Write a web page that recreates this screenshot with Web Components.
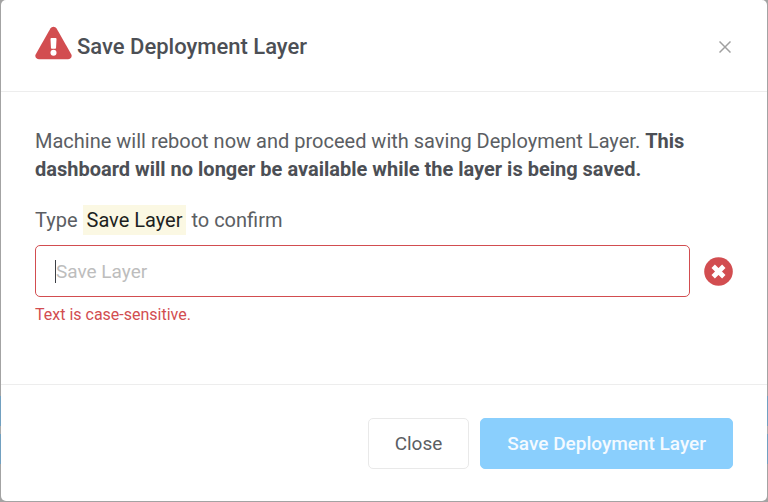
<!DOCTYPE html>
<html lang="en">
<head>
<meta charset="utf-8">
<meta name="viewport" content="width=device-width, initial-scale=1">
<title>Save Deployment Layer</title>
<style>
  body {
    margin: 0;
    min-height: 100vh;
    display: grid;
    box-sizing: border-box;
    padding: 0 1px 1px;
    background: linear-gradient(#a3a3a3 0 396px, #71a0c0 396px 426px, #aaa 426px 434px, #71a0c0 434px 464px, #a3a3a3 464px);
    font-family: Roboto, sans-serif;
    font-size: 20px;
    line-height: 28px;
    color: #5b5e63;
    --danger: #d24d50;
    --line: #ededed;
    --strong: #4c4f55;
    --control-size: 19px;
  }
</style>
</head>
<body>
<modal-dialog heading="Save Deployment Layer">
  <warning-icon slot="icon"></warning-icon>
  <confirm-message>
    Machine will reboot now and proceed with saving Deployment Layer.
    <strong>This dashboard will no longer be available while the layer is being saved.</strong>
  </confirm-message>
  <confirm-field phrase="Save Layer" hint="Text is case-sensitive."></confirm-field>
  <modal-button slot="actions">Close</modal-button>
  <modal-button slot="actions" primary>Save Deployment Layer</modal-button>
</modal-dialog>

<template id="modal-dialog">
  <style>
    :host {
      display: flex;
      flex-direction: column;
      background: #fff;
      border-radius: 5px;
      min-width: 0;
    }
    header {
      display: flex;
      align-items: center;
      gap: 5px;
      padding: 25px 34px 30px;
      border-bottom: 1px solid var(--line);
    }
    h1 {
      flex: 1;
      margin: 0;
      padding-top: 8px;
      font-size: 22px;
      font-weight: 500;
      line-height: 28px;
      color: var(--strong);
    }
    .close {
      display: flex;
      padding: 2px;
      margin-top: 8px;
      border: 0;
      background: none;
      cursor: pointer;
    }
    .content {
      flex: 1;
      padding: 35px 34px 32px;
    }
    footer {
      display: flex;
      justify-content: flex-end;
      gap: 11px;
      padding: 33px 34px 32px;
      border-top: 1px solid var(--line);
    }
  </style>
  <header>
    <slot name="icon"></slot>
    <h1></h1>
    <button class="close" type="button" aria-label="Close dialog">
      <svg width="12" height="12" viewBox="0 0 12 12" fill="none" stroke="#a0a0a0" stroke-width="1.5">
        <path d="M.5 .5l11 11M11.5 .5l-11 11"/>
      </svg>
    </button>
  </header>
  <div class="content"><slot></slot></div>
  <footer><slot name="actions"></slot></footer>
</template>

<template id="warning-icon">
  <style>
    :host { display: block; }
    svg { display: block; }
  </style>
  <svg width="37" height="34" viewBox="0 0 38 34" aria-hidden="true">
    <path fill="#d24d50" d="M15.8 2.1a3.7 3.7 0 0 1 6.4 0L37.2 28.5a3.6 3.6 0 0 1-3.1 5.3H3.9a3.6 3.6 0 0 1-3.1-5.3z"/>
    <path fill="#fff" d="M15.9 12.8c0-.5.4-.9.9-.9h4.4c.5 0 .9.4.9.9l-.5 9.3c0 .5-.4.8-.9.8h-3.4c-.5 0-.9-.3-.9-.8z"/>
    <circle cx="19" cy="27" r="3.1" fill="#fff"/>
  </svg>
</template>

<template id="confirm-message">
  <style>
    :host { display: block; }
    p { margin: 0; }
    ::slotted(strong) { color: var(--strong); font-weight: 700; }
  </style>
  <p><slot></slot></p>
</template>

<template id="confirm-field">
  <style>
    :host {
      display: block;
      margin-top: 22px;
    }
    label {
      display: block;
      line-height: 30px;
    }
    mark {
      display: inline-block;
      padding: 0 4px;
      background: #fbf8e3;
      color: #1d1f21;
    }
    .row {
      display: flex;
      align-items: center;
      gap: 14px;
      margin-top: 10px;
    }
    .box {
      position: relative;
      flex: 1;
      display: flex;
    }
    input {
      flex: 1;
      min-width: 0;
      height: 52px;
      box-sizing: border-box;
      padding: 0 20px;
      border: 1px solid var(--danger);
      border-radius: 5px;
      background: #fff;
      font: inherit;
      font-size: var(--control-size);
      color: var(--strong);
      caret-color: transparent;
      outline: none;
    }
    input::placeholder { color: #bdbdbd; opacity: 1; }
    .caret {
      position: absolute;
      left: 20px;
      top: 15px;
      width: 1px;
      height: 23px;
      background: #3c3f45;
    }
    svg { display: block; }
    .hint {
      margin: 6px 0 0;
      font-size: 16px;
      line-height: 24px;
      color: var(--danger);
    }
  </style>
  <label for="phrase">Type <mark></mark> to confirm</label>
  <div class="row">
    <div class="box">
      <input id="phrase" type="text" autocomplete="off" aria-invalid="true" aria-describedby="hint">
      <span class="caret"></span>
    </div>
    <svg width="29" height="29" viewBox="0 0 29 29" aria-hidden="true">
      <circle cx="14.5" cy="14.5" r="14.3" fill="#d24d50"/>
      <path d="M9.2 9.2l10.6 10.6M19.8 9.2L9.2 19.8" stroke="#fff" stroke-width="4.8"/>
    </svg>
  </div>
  <p class="hint" id="hint"></p>
</template>

<template id="modal-button">
  <style>
    :host { display: block; }
    button {
      height: 51px;
      padding: 0 26px;
      border: 1px solid #e9e9e9;
      border-radius: 5px;
      background: #fff;
      font: inherit;
      font-size: var(--control-size);
      color: #5b5e63;
      cursor: pointer;
    }
    :host([primary]) button {
      border-color: #8acffd;
      background: #8acffd;
      color: #f4faff;
      font-weight: 500;
    }
  </style>
  <button type="button"><slot></slot></button>
</template>

<script>
  class TemplateElement extends HTMLElement {
    constructor() {
      super();
      this.attachShadow({ mode: 'open' });
      const template = document.getElementById(this.localName);
      this.shadowRoot.appendChild(template.content.cloneNode(true));
    }
  }

  class ModalDialog extends TemplateElement {
    connectedCallback() {
      this.setAttribute('role', 'dialog');
      this.shadowRoot.querySelector('h1').textContent = this.getAttribute('heading');
      this.shadowRoot.querySelector('.close').addEventListener('click', () => {
        this.dispatchEvent(new CustomEvent('close'));
      });
    }
  }

  class ConfirmField extends TemplateElement {
    connectedCallback() {
      const phrase = this.getAttribute('phrase');
      const input = this.shadowRoot.querySelector('input');
      const caret = this.shadowRoot.querySelector('.caret');
      this.shadowRoot.querySelector('mark').textContent = phrase;
      this.shadowRoot.querySelector('.hint').textContent = this.getAttribute('hint');
      input.placeholder = phrase;

      // the drawn caret only stands in for an empty field
      input.addEventListener('input', () => {
        const filled = input.value !== '';
        caret.style.display = filled ? 'none' : '';
        input.style.caretColor = filled ? 'auto' : '';
      });
    }
  }

  window.customElements.define('modal-dialog', ModalDialog);
  window.customElements.define('warning-icon', class extends TemplateElement {});
  window.customElements.define('confirm-message', class extends TemplateElement {});
  window.customElements.define('confirm-field', ConfirmField);
  window.customElements.define('modal-button', class extends TemplateElement {});
</script>
</body>
</html>
